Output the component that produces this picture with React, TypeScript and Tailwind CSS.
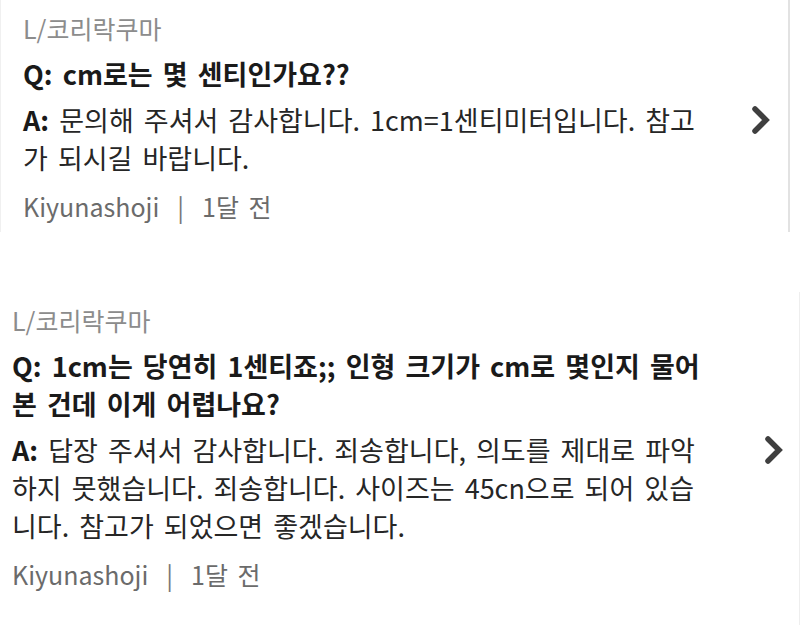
import React from "react";

type Inquiry = {
  writer: string;
  question: string[];
  answer: string[];
  seller: string;
  ago: string;
};

const inquiries: Inquiry[] = [
  {
    writer: "L/코리락쿠마",
    question: ["cm로는 몇 센티인가요??"],
    answer: ["문의해 주셔서 감사합니다. 1cm=1센티미터입니다. 참고", "가 되시길 바랍니다."],
    seller: "Kiyunashoji",
    ago: "1달 전",
  },
  {
    writer: "L/코리락쿠마",
    question: ["1cm는 당연히 1센티죠;; 인형 크기가 cm로 몇인지 물어", "본 건데 이게 어렵나요?"],
    answer: [
      "답장 주셔서 감사합니다. 죄송합니다, 의도를 제대로 파악",
      "하지 못했습니다. 죄송합니다. 사이즈는 45cn으로 되어 있습",
      "니다. 참고가 되었으면 좋겠습니다.",
    ],
    seller: "Kiyunashoji",
    ago: "1달 전",
  },
];

function Chevron() {
  return (
    <svg width="22" height="30" viewBox="0 0 22 30" className="shrink-0">
      <polyline
        points="5,4 16,15 5,26"
        fill="none"
        stroke="#3f3f3f"
        strokeWidth="5.5"
        strokeLinecap="round"
        strokeLinejoin="miter"
      />
    </svg>
  );
}

function InquiryCard({ item, className }: { item: Inquiry; className: string }) {
  return (
    <div className={className}>
      <div className="text-[#8c8c8c] text-[25px]">{item.writer}</div>

      <div className="font-bold text-[#1a1a1a]">
        {item.question.map((line, i) => (
          <div key={i} className="whitespace-nowrap">
            {i === 0 && <span>Q: </span>}
            {line}
          </div>
        ))}
      </div>

      <div className="flex items-start justify-between text-[#262626]">
        <div>
          {item.answer.map((line, i) => (
            <div key={i} className="whitespace-nowrap">
              {i === 0 && <span className="font-bold text-[#1a1a1a]">A: </span>}
              {line}
            </div>
          ))}
        </div>
        <div className="h-[38px] flex items-center">
          <Chevron />
        </div>
      </div>

      <div className="flex items-center text-[#6b6b6b] text-[25px] mt-[2px]">
        <span>{item.seller}</span>
        <span className="mx-[18px] text-[#777]">|</span>
        <span>{item.ago}</span>
      </div>
    </div>
  );
}

export default function App() {
  return (
    <div
      className="w-[800px] h-[625px] overflow-hidden bg-white text-[27px] leading-[38px] [word-spacing:4px]"
      style={{ fontFamily: '"Noto Sans CJK KR", "Noto Sans", sans-serif' }}
    >
      <InquiryCard
        item={inquiries[0]}
        className="w-[790px] h-[232px] flex flex-col gap-2 pt-[9px] pl-[22px] pr-[16px] border-l border-r-2 border-l-[#f0f0f0] border-r-[#e2e2e2]"
      />
      <InquiryCard
        item={inquiries[1]}
        className="mt-[60px] w-[800px] h-[340px] flex flex-col gap-2 pt-[9px] pl-[12px] pr-[14px] border-r border-r-[#eeeeee]"
      />
    </div>
  );
}
